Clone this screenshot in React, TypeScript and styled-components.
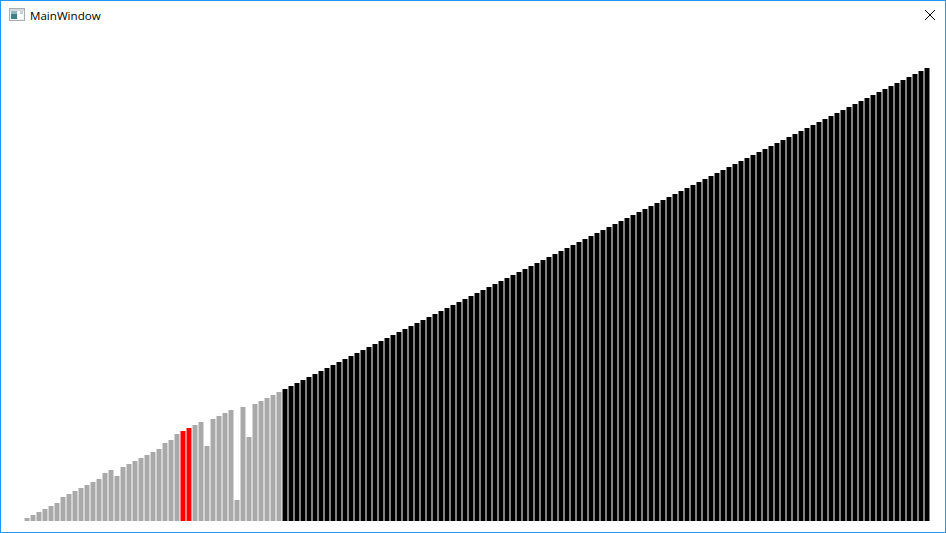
import { createGlobalStyle, styled } from "styled-components"

const GlobalStyle = createGlobalStyle`
  html, body { margin: 0; padding: 0; background: #fff; }
`

const Window = styled.div`
  width: 946px; height: 533px; box-sizing: border-box;
  border: 1px solid #2196f3; background: #fff;
  display: flex; flex-direction: column; overflow: hidden;
`
const TitleBar = styled.header`
  height: 28px; flex: none; padding: 0 0 0 8px; margin-bottom: 1px;
  display: flex; align-items: center; gap: 5px;
`
const Title = styled.span`
  flex: 1; font: 11.6px "Open Sans", "Noto Sans", sans-serif; color: #000;
`
const CloseBtn = styled.button`
  width: 30px; height: 28px; border: none; background: none; padding: 0;
  display: flex; align-items: center; justify-content: center;
`
const Chart = styled.main`
  flex: 1; display: flex; align-items: flex-end;
  padding: 0 0 11px 23px;
`
const COLORS = {
  done: { fill: "#a9a9a9", edge: "#d4d4d4" },
  active: { fill: "#ff0000", edge: "#ff8080" },
  pending: { fill: "#000000", edge: "#808080" },
}
type Estado = keyof typeof COLORS

// barra de 5px em x.5: 4px cheios e 1px de meia cobertura de cada lado
const Bar = styled.div<{ $estado: Estado }>`
  width: 6px; flex: none; box-sizing: border-box;
  background: ${p => COLORS[p.$estado].fill};
  background-clip: padding-box;
  border-left: 1px solid ${p => COLORS[p.$estado].edge};
  border-right: 1px solid ${p => COLORS[p.$estado].edge};
`

// primeiros 43 valores ainda fora de ordem, o resto já está no lugar
const PARCIAL = [
  1, 2, 3, 4, 5, 6, 8, 9, 10, 11, 12, 13, 14, 16, 17, 15, 18, 19, 20, 21, 22, 23,
  24, 26, 27, 29, 30, 31, 32, 33, 25, 34, 35, 36, 37, 7, 38, 28, 39, 40, 41, 42, 43,
]
const TOTAL = 151
const VALORES = Array.from({ length: TOTAL }, (_, i) => PARCIAL[i] ?? i + 1)

function estadoDe(i: number): Estado {
  if (i === 26 || i === 27) return "active"
  return i < PARCIAL.length ? "done" : "pending"
}

function WindowIcon() {
  return (
    <svg width="16" height="16" viewBox="0 0 16 16">
      <rect x="0.5" y="1.5" width="15" height="12" fill="#f4f6f6" stroke="#a8aeb0" />
      <rect x="1" y="2" width="14" height="2" fill="#d5dadd" />
      <rect x="2" y="4" width="6" height="8" fill="#3f7f86" />
      <rect x="2" y="4" width="6" height="3" fill="#8fb6bd" />
      <rect x="9" y="4" width="5" height="8" fill="#fff" />
      <rect x="11" y="4" width="3" height="3" fill="#c9d0d2" />
    </svg>
  )
}

export default function App() {
  return (
    <>
      <GlobalStyle />
      <Window>
        <TitleBar>
          <WindowIcon />
          <Title>MainWindow</Title>
          <CloseBtn aria-label="Fechar">
            <svg width="10" height="10" viewBox="0 0 10 10">
              <path d="M0 0L10 10M10 0L0 10" stroke="#000" strokeWidth="1" fill="none" />
            </svg>
          </CloseBtn>
        </TitleBar>
        <Chart>
          {VALORES.map((v, i) => (
            <Bar key={i} $estado={estadoDe(i)} style={{ height: v * 3 }} />
          ))}
        </Chart>
      </Window>
    </>
  )
}
